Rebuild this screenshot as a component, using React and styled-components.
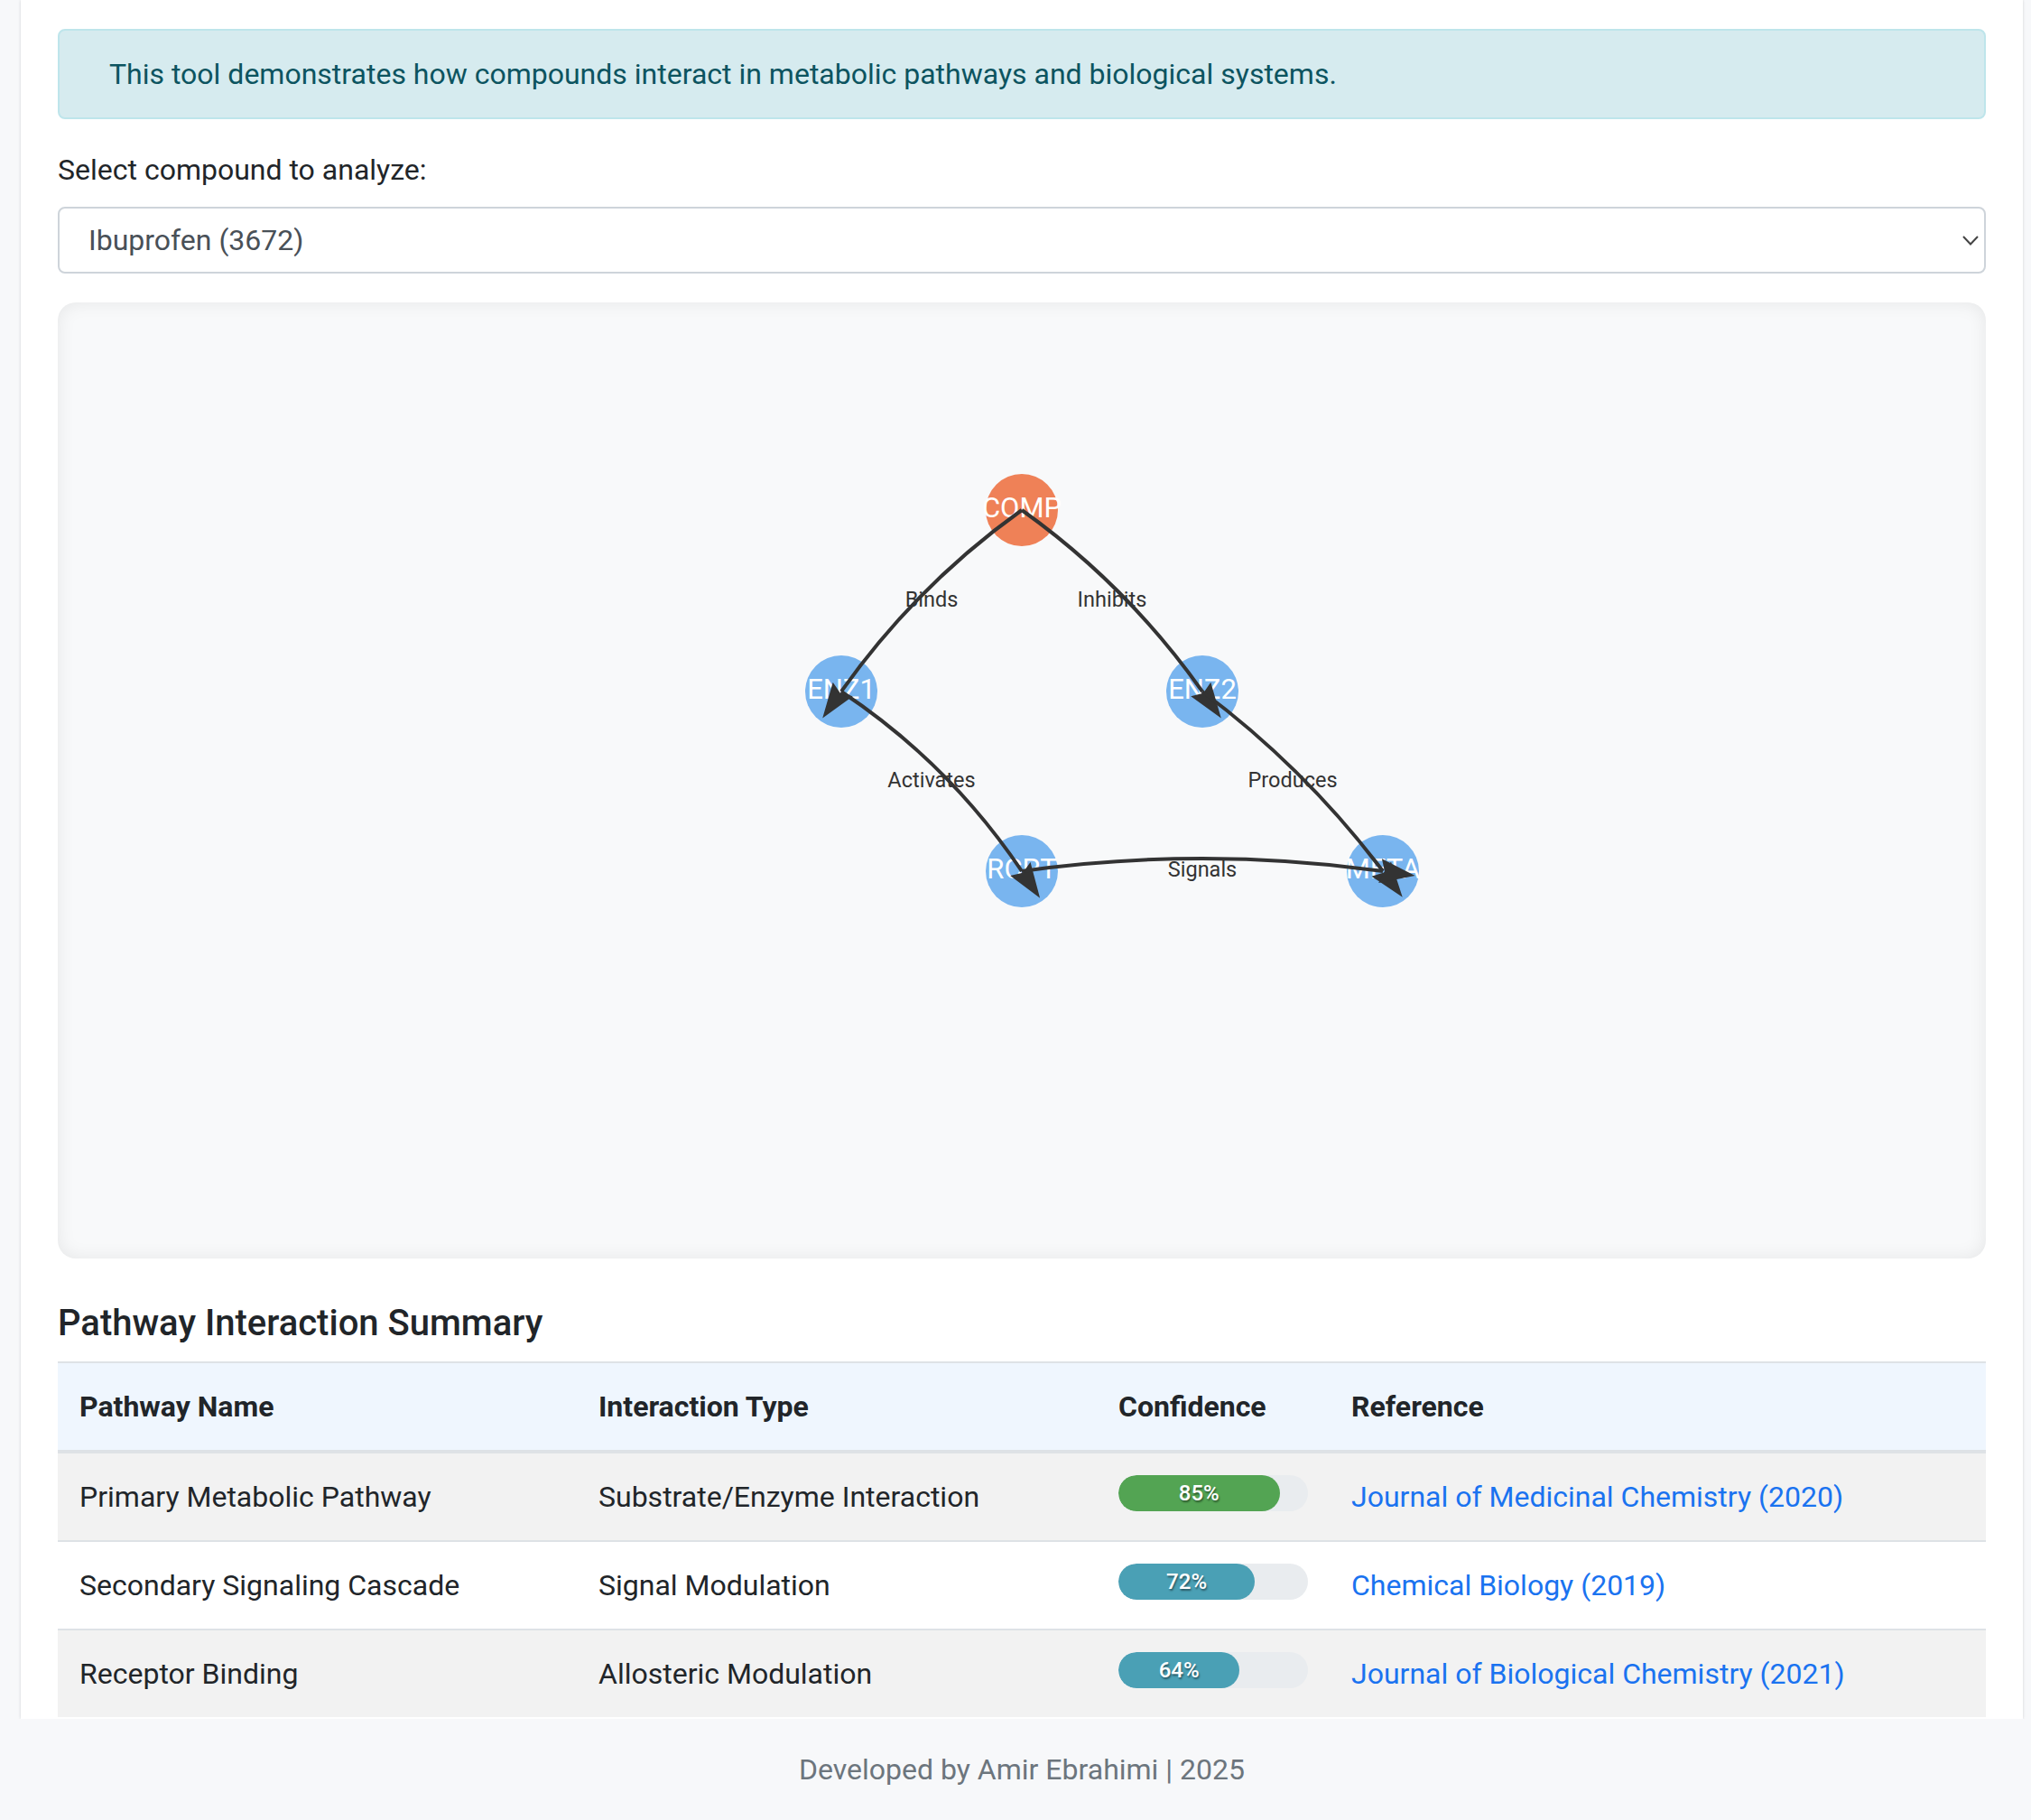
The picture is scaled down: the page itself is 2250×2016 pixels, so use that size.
import React, { useState } from 'react'
import styled, { createGlobalStyle } from 'styled-components'

const GlobalStyle = createGlobalStyle`
    html, body {
        margin: 0;
        padding: 0;
        background: #f7f8fa;
        overflow-x: hidden;
    }
    body {
        font-family: Roboto, "Liberation Sans", sans-serif;
        font-size: 32px;
        line-height: 1.5;
        color: #212529;
    }
`

const nodes = {
    COMP: { x: 1068, y: 230, color: '#ef8157' },
    ENZ1: { x: 868, y: 431, color: '#79b5ef' },
    ENZ2: { x: 1268, y: 431, color: '#79b5ef' },
    RCPT: { x: 1068, y: 630, color: '#79b5ef' },
    META: { x: 1468, y: 630, color: '#79b5ef' },
}

// bend = how far the curve bows to the left of its direction of travel
const edges = [
    { from: 'COMP', to: 'ENZ1', label: 'Binds', bend: -12 },
    { from: 'COMP', to: 'ENZ2', label: 'Inhibits', bend: 12 },
    { from: 'ENZ1', to: 'RCPT', label: 'Activates', bend: 14 },
    { from: 'ENZ2', to: 'META', label: 'Produces', bend: 10 },
    { from: 'RCPT', to: 'META', label: 'Signals', bend: 14 },
]

const pathways = [
    { name: 'Primary Metabolic Pathway', type: 'Substrate/Enzyme Interaction', confidence: 85, ref: 'Journal of Medicinal Chemistry (2020)' },
    { name: 'Secondary Signaling Cascade', type: 'Signal Modulation', confidence: 72, ref: 'Chemical Biology (2019)' },
    { name: 'Receptor Binding', type: 'Allosteric Modulation', confidence: 64, ref: 'Journal of Biological Chemistry (2021)' },
]

function edgePath(e) {
    const s = nodes[e.from]
    const t = nodes[e.to]
    const dx = t.x - s.x
    const dy = t.y - s.y
    const len = Math.sqrt(dx * dx + dy * dy)
    const cx = (s.x + t.x) / 2 + (dy / len) * e.bend * 2
    const cy = (s.y + t.y) / 2 + (-dx / len) * e.bend * 2
    return `M${s.x},${s.y} Q${cx},${cy} ${t.x},${t.y}`
}

function PathwayGraph() {
    return (
        <GraphPanel>
            <svg width="100%" height="100%" viewBox="0 0 2136 1059">
                <defs>
                    <marker id="arrow" viewBox="0 -14 40 28" refX="3" refY="0" markerWidth="40" markerHeight="28" markerUnits="userSpaceOnUse" orient="auto">
                        <path d="M0,-13.5 L39,0 L0,13.5 L5,0 Z" fill="#333" />
                    </marker>
                </defs>
                {Object.entries(nodes).map(([id, n]) => (
                    <g key={id}>
                        <circle cx={n.x} cy={n.y} r="40" fill={n.color} />
                        <NodeLabel x={n.x} y={n.y} dy="0.26em">{id}</NodeLabel>
                    </g>
                ))}
                {edges.map((e) => (
                    <path key={e.label} d={edgePath(e)} fill="none" stroke="#333" strokeWidth="4" markerEnd="url(#arrow)" />
                ))}
                {edges.map((e) => (
                    <EdgeLabel key={e.label} x={(nodes[e.from].x + nodes[e.to].x) / 2} y={(nodes[e.from].y + nodes[e.to].y) / 2} dy="0.26em">
                        {e.label}
                    </EdgeLabel>
                ))}
            </svg>
        </GraphPanel>
    )
}

function App() {
    const [compound, setCompound] = useState('3672')

    return (
        <Page>
            <GlobalStyle />
            <Container>
                <Alert>This tool demonstrates how compounds interact in metabolic pathways and biological systems.</Alert>

                <Label htmlFor="compound">Select compound to analyze:</Label>
                <SelectWrap>
                    <Select id="compound" value={compound} onChange={(e) => setCompound(e.target.value)}>
                        <option value="3672">Ibuprofen (3672)</option>
                        <option value="2244">Aspirin (2244)</option>
                        <option value="1983">Acetaminophen (1983)</option>
                    </Select>
                    <Chevron viewBox="0 0 18 11" width="18" height="11">
                        <path d="M1 1 L9 9.5 L17 1" fill="none" stroke="#444" strokeWidth="2" />
                    </Chevron>
                </SelectWrap>

                <PathwayGraph />

                <Heading>Pathway Interaction Summary</Heading>
                <Table>
                    <thead>
                        <tr>
                            <Th style={{ width: 527 }}>Pathway Name</Th>
                            <Th style={{ width: 528 }}>Interaction Type</Th>
                            <Th style={{ width: 209 }}>Confidence</Th>
                            <Th>Reference</Th>
                        </tr>
                    </thead>
                    <tbody>
                        {pathways.map((p, i) => (
                            <Row key={p.name} $striped={i % 2 === 0}>
                                <Td>{p.name}</Td>
                                <Td>{p.type}</Td>
                                <Td>
                                    <Track>
                                        <Fill $color={p.confidence >= 80 ? '#53a453' : '#4aa0b5'} style={{ width: `${p.confidence}%` }}>
                                            {p.confidence}%
                                        </Fill>
                                    </Track>
                                </Td>
                                <Td>
                                    <RefLink href="#">{p.ref}</RefLink>
                                </Td>
                            </Row>
                        ))}
                    </tbody>
                </Table>
            </Container>
            <Footer>Developed by Amir Ebrahimi | 2025</Footer>
        </Page>
    )
}

export default App

const Page = styled.div`
    width: 2264px;
`

const Container = styled.div`
    box-sizing: border-box;
    width: 2218px;
    margin-left: 23px;
    padding: 32px 41px 2px;
    background: #fff;
    box-shadow: 0 0 3px rgba(0, 0, 0, 0.16);
`

const Alert = styled.div`
    padding: 24px 55px;
    margin-bottom: 32px;
    border: 2px solid #bee5eb;
    border-radius: 8px;
    background: #d6ebef;
    color: #0c5460;
`

const Label = styled.label`
    display: block;
    margin-bottom: 17px;
`

const SelectWrap = styled.div`
    position: relative;
    margin-bottom: 32px;
`

const Select = styled.select`
    display: block;
    box-sizing: border-box;
    width: 100%;
    height: 74px;
    padding: 0 64px 0 32px;
    border: 2px solid #ced4da;
    border-radius: 8px;
    background: #fff;
    color: #495057;
    font-family: inherit;
    font-size: 32px;
    appearance: none;
    -webkit-appearance: none;
    outline: none;
`

const Chevron = styled.svg`
    position: absolute;
    right: 8px;
    top: 32px;
    pointer-events: none;
`

const GraphPanel = styled.div`
    height: 1059px;
    margin-bottom: 48px;
    border-radius: 20px;
    background: #f8f9fa;
    box-shadow: inset 0 0 20px rgba(0, 0, 0, 0.08);
    overflow: hidden;

    svg {
        display: block;
    }
`

const NodeLabel = styled.text`
    fill: #fff;
    font-family: Roboto, sans-serif;
    font-size: 31px;
    text-anchor: middle;
`

const EdgeLabel = styled.text`
    fill: #333;
    font-family: Roboto, sans-serif;
    font-size: 23.5px;
    text-anchor: middle;
`

const Heading = styled.h5`
    margin: 0 0 18px;
    font-size: 40px;
    font-weight: 500;
    line-height: 1.2;
`

const Table = styled.table`
    width: 100%;
    border-collapse: collapse;
`

const Th = styled.th`
    padding: 24px;
    text-align: left;
    font-weight: 700;
    background: #eff6fe;
    border-top: 2px solid #dee2e6;
    border-bottom: 4px solid #dee2e6;
    vertical-align: bottom;
`

const Row = styled.tr`
    background: ${(p) => (p.$striped ? '#f2f2f2' : '#fff')};
`

const Td = styled.td`
    padding: 24px;
    border-top: 2px solid #dee2e6;
    vertical-align: top;
`

const Track = styled.div`
    width: 210px;
    height: 40px;
    border-radius: 20px;
    background: #e9ecef;
    overflow: hidden;
`

const Fill = styled.div`
    height: 100%;
    border-radius: 20px;
    background: ${(p) => p.$color};
    color: #fff;
    font-size: 24px;
    font-weight: 500;
    line-height: 40px;
    text-align: center;
    text-shadow: 1px 2px 2px rgba(0, 0, 0, 0.45);
`

const RefLink = styled.a`
    color: #1a73f0;
    text-decoration: none;
`

const Footer = styled.footer`
    padding: 32px 0;
    text-align: center;
    color: #6c757d;
    background: #f7f8fa;
`
